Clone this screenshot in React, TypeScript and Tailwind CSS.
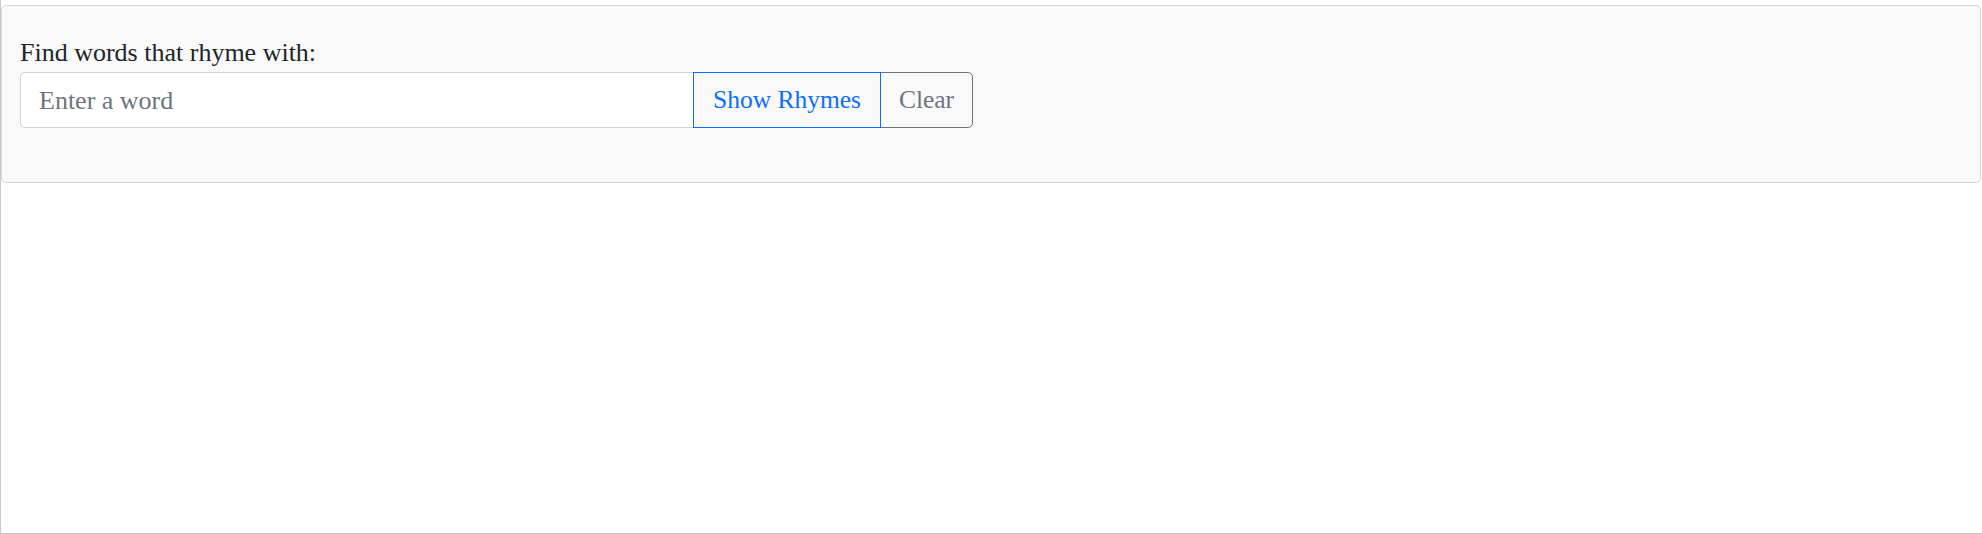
import React, { useState } from 'react';

export default function App() {
  const [word, setWord] = useState('');

  return (
    <div className="h-[534px] w-full bg-white pt-[5px] border-l border-b border-[#c8c8c8] font-['Liberation_Serif','Times_New_Roman',serif]">
      {/* Search card */}
      <div className="mr-px h-[178px] rounded-[5px] border border-[#d6d6d6] bg-[#f9f9f9] pl-[18px] pt-[30px]">
        <label htmlFor="word" className="mb-[2px] block text-[26px] leading-[34px] text-[#212529]">
          Find words that rhyme with:
        </label>
        <div className="flex h-[56px]">
          <input
            id="word"
            value={word}
            onChange={(e) => setWord(e.target.value)}
            placeholder="Enter a word"
            className="w-[673px] rounded-l-[5px] border border-r-0 border-[#ced4da] bg-white px-[18px] font-['Liberation_Serif','Times_New_Roman',serif] text-[26px] text-[#212529] placeholder:text-[#6c757d] focus:outline-none"
          />
          <button className="relative z-10 w-[188px] border border-[#0d6efd] bg-transparent font-['Liberation_Serif','Times_New_Roman',serif] text-[25.5px] text-[#0d6efd]">
            Show Rhymes
          </button>
          <button
            onClick={() => setWord('')}
            className="-ml-px w-[93px] rounded-r-[5px] border border-[#6c757d] bg-transparent font-['Liberation_Serif','Times_New_Roman',serif] text-[25.5px] text-[#6c757d]"
          >
            Clear
          </button>
        </div>
      </div>
    </div>
  );
}
